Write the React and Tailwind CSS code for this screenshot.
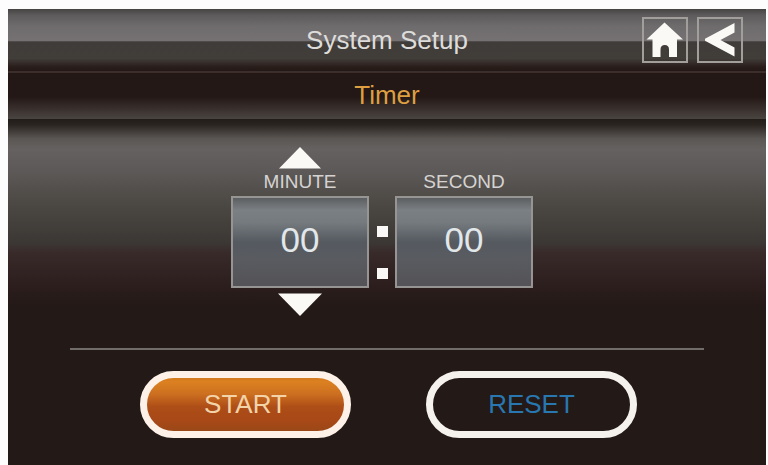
import React from "react";

function HomeIcon() {
  return (
    <svg viewBox="0 0 42 42" className="h-full w-full" fill="#faf9f6" aria-hidden="true">
      <path d="M20.500 3.500 L39 20.500 H33 V38 H25 V30.500 Q25 26 20.800 26 Q16.500 26 16.500 30.500 V38 H8.500 V20.500 H2.500 Z" />
    </svg>
  );
}

function BackIcon() {
  return (
    <svg viewBox="0 0 42 42" className="h-full w-full" fill="#faf9f6" aria-hidden="true">
      <path d="M35.500 4 V13.500 L21.500 21 L35.500 28.500 V37.500 L6 21.800 V19.800 Z" />
    </svg>
  );
}

function IconButton({ label, children }) {
  return (
    <button type="button" aria-label={label} className="h-[46px] w-[46px] border-2 border-[#a19e9c]">
      {children}
    </button>
  );
}

function TimeField({ id, value }) {
  return (
    <input
      id={id}
      type="text"
      inputMode="numeric"
      defaultValue={value}
      className="h-full w-full border-2 border-[#969594] bg-linear-[180deg,#5c5f61_0%,#7b8084_14%,#757a7f_28%,#555a60_50%,#595b60_70%,#545357_100%] pb-1 text-center text-[35px] text-[#e2e7ea] outline-none"
    />
  );
}

export default function App() {
  return (
    <main className="flex min-h-screen flex-col bg-[#fdfdfd] pt-[9px] pr-0.5 pl-2 font-['Liberation_Sans',Arial,sans-serif]">
      <div className="flex grow flex-col bg-[#231a18]">
        <header className="grid h-[62px] grid-cols-[1fr_auto_1fr] items-center bg-linear-[180deg,#464443_0%,#5d5b5b_10%,#6f6c6d_28%,#757172_51%,#403c39_53%,#413d39_80%,#2a1e1b_93%,#241816_100%] px-[23px]">
          <h1 className="col-start-2 text-[26px] leading-8 text-[#dddcda]">System Setup</h1>
          <nav className="flex justify-end gap-[9px]">
            <IconButton label="Home">
              <HomeIcon />
            </IconButton>
            <IconButton label="Back">
              <BackIcon />
            </IconButton>
          </nav>
        </header>

        <div className="flex h-12 items-center justify-center border-t-2 border-[#3b2e2b] bg-linear-[180deg,#231815_0%,#231815_52%,#342a27_72%,#4a4541_100%] pb-0.5">
          <h2 className="text-[26px] leading-8 text-[#dd9f42]">Timer</h2>
        </div>

        <section className="grow bg-linear-[180deg,#211c18_0px,#2a2521_6px,#5b5754_20px,#656160_30px,#5c5857_54px,#4c4843_84px,#3b3734_124px,#392a2a_134px,#2a1d1c_170px,#231917_188px,#231917_100%]">
          <div className="grid grid-cols-[138px_26px_138px] grid-rows-[21px_28px_92px_28px] justify-center pt-7 pr-2.5">
            <button type="button" aria-label="Increase minutes" className="col-start-1 justify-self-center">
              <svg viewBox="0 0 44 22" className="h-[22px] w-11" fill="#faf9f6" aria-hidden="true">
                <path d="M22 0 L43 21.500 H1 Z" />
              </svg>
            </button>
            <label htmlFor="minute" className="col-start-1 row-start-2 text-center text-[19px] leading-7 text-[#d5d3d1]">
              MINUTE
            </label>
            <label htmlFor="second" className="col-start-3 row-start-2 text-center text-[19px] leading-7 text-[#d5d3d1]">
              SECOND
            </label>
            <div className="col-start-1 row-start-3">
              <TimeField id="minute" value="00" />
            </div>
            <div className="col-start-2 row-start-3 flex flex-col items-center gap-[31px] pt-[30px]" aria-hidden="true">
              <span className="h-[11px] w-[11px] shrink-0 bg-[#faf9f8]" />
              <span className="h-[11px] w-[11px] shrink-0 bg-[#faf9f8]" />
            </div>
            <div className="col-start-3 row-start-3">
              <TimeField id="second" value="00" />
            </div>
            <button type="button" aria-label="Decrease minutes" className="col-start-1 row-start-4 self-end justify-self-center">
              <svg viewBox="0 0 44 23" className="h-[23px] w-11" fill="#faf9f6" aria-hidden="true">
                <path d="M0 0.500 H44 L22 23 Z" />
              </svg>
            </button>
          </div>

          <hr className="mx-[62px] mt-8 border-t-2 border-[#716b69]" />

          <div className="flex justify-center gap-[75px] pt-[21px] pb-6 pl-[3px]">
            <button
              type="button"
              className="h-[67px] w-[211px] rounded-full border-[7px] border-[#fdf1e8] bg-linear-[180deg,#c26f1a_0%,#dc8121_16%,#cd7020_34%,#ad4d17_54%,#a74817_75%,#924818_100%] bg-origin-border text-[26px] text-[#f3d3a8]"
            >
              START
            </button>
            <button
              type="button"
              className="h-[67px] w-[211px] rounded-full border-[7px] border-[#f5f2ee] text-[26px] text-[#2877b0]"
            >
              RESET
            </button>
          </div>
        </section>
      </div>
    </main>
  );
}
